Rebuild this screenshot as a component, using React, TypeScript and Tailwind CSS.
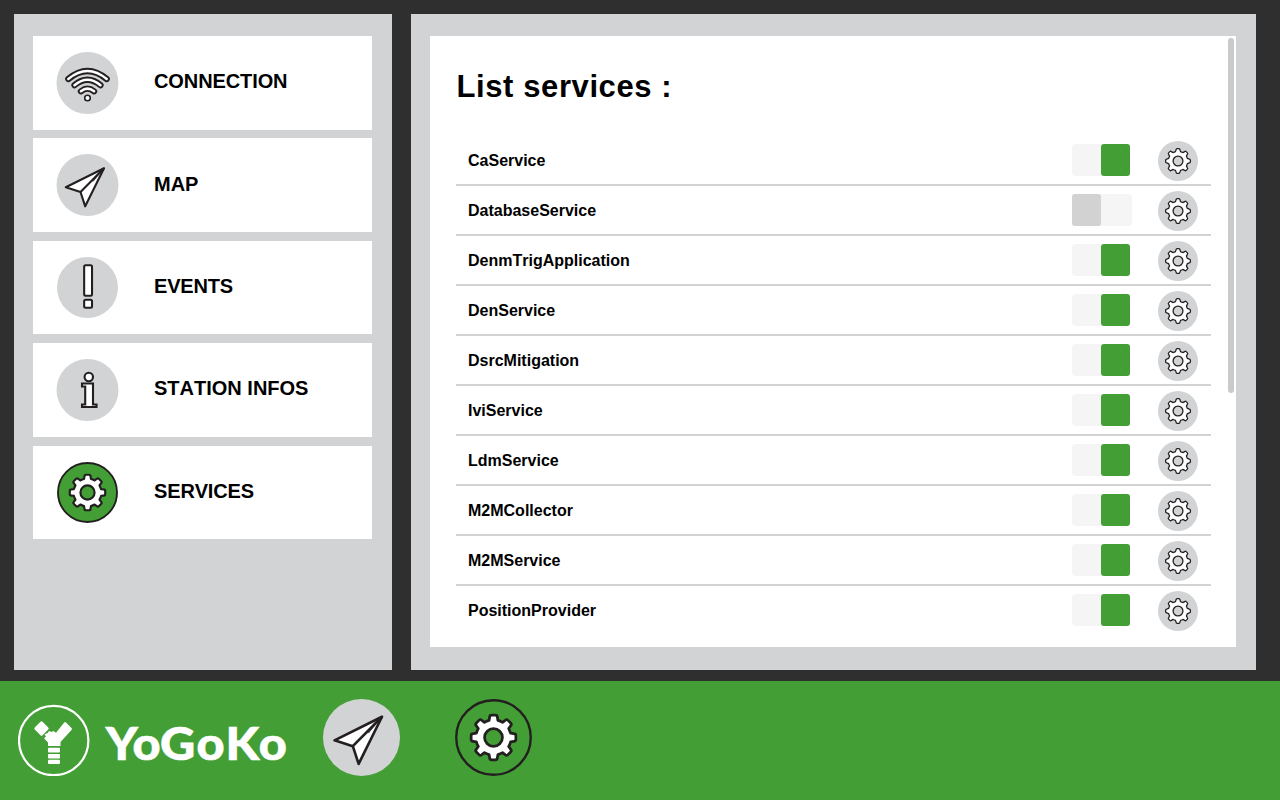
import React from "react";

type IconName = "wifi" | "plane" | "alert" | "info" | "gear";

const INK = "#231f20";
const GREY = "#d1d3d4";
const GREEN = "#439f35";

function gearPath(c: number, outer: number, body: number, halfTop: number, halfBase: number): string {
  const parts: string[] = [];
  for (let i = 0; i < 8; i++) {
    const a = (i * Math.PI) / 4;
    const at = (r: number, w: number) =>
      `${(c + r * Math.cos(a) - w * Math.sin(a)).toFixed(2)} ${(c + r * Math.sin(a) + w * Math.cos(a)).toFixed(2)}`;
    parts.push(i === 0 ? `M${at(body, -halfBase)}` : `A${body} ${body} 0 0 1 ${at(body, -halfBase)}`);
    parts.push(`L${at(outer - 1.6, -halfTop)} Q${at(outer, -halfTop)} ${at(outer, -halfTop + 1.6)}`);
    parts.push(`L${at(outer, halfTop - 1.6)} Q${at(outer, halfTop)} ${at(outer - 1.6, halfTop)} L${at(body, halfBase)}`);
  }
  return parts.join(" ") + "Z";
}

const GEAR = gearPath(31, 18, 13.8, 3.1, 3.5);
const GEAR_SMALL = gearPath(31, 19.2, 14.6, 2.9, 3.9);

function CircleIcon({ name, active = false, small = false, shift = false, className }: { name: IconName; active?: boolean; small?: boolean; shift?: boolean; className: string }) {
  const fill = active ? GREEN : GREY;
  return (
    <svg viewBox={shift ? "-0.5 0 62 62" : "0 0 62 62"} className={`overflow-visible ${className}`} fill="#fff" stroke={INK} strokeWidth="2.1" strokeLinejoin="round">
      <circle cx="31" cy="31" r={active ? 30 : 31} fill={fill} stroke={active ? INK : "none"} strokeWidth="1.9" />
      {name === "wifi" && (
        <g fill="none" strokeLinecap="round">
          {["M11.8 27Q31 11 50.2 27", "M18 33.2Q31 22.2 44 33.2", "M24.4 39.3Q31 34 37.6 39.3"].map((d) => (
            <g key={d}>
              <path d={d} strokeWidth="6.200" />
              <path d={d} stroke="#fff" strokeWidth="2.500" />
            </g>
          ))}
          <circle cx="31" cy="46" r="2.800" fill="#fff" strokeWidth="1.600" />
        </g>
      )}
      {name === "plane" && (
        <g>
          <path d="M47.500 14.300L9.300 33.300L24 38L28.700 52.300Z" />
          <path d="M24 38L47.500 14.300" fill="none" />
          <path d="M47.500 14.300L36.500 27.500L43.500 17.500" fill={INK} strokeWidth="0.500" />
        </g>
      )}
      {name === "alert" && (
        <g>
          <rect x="27.600" y="8.300" width="8" height="31" rx="1.500" />
          <rect x="27.600" y="43.500" width="8" height="8" rx="1.500" />
        </g>
      )}
      {name === "info" && (
        <g>
          <circle cx="32.300" cy="18" r="4.200" />
          <path d="M25.500 24.500H36.500V45.500H40V48H25.500V45.500H28.700V27.500H25.500Z" strokeLinejoin="miter" />
        </g>
      )}
      {name === "gear" && (
        <g>
          <path d={small ? GEAR_SMALL : GEAR} strokeWidth={small ? 2 : 2.2} />
          <circle cx="31" cy="31" r={small ? 7.6 : 7.2} fill={fill} strokeWidth={small ? 2 : 2.2} />
        </g>
      )}
    </svg>
  );
}

const menu: { label: string; icon: IconName; active?: boolean; box: string; text: string }[] = [
  { label: "CONNECTION", icon: "wifi", box: "-mb-px h-[94px]", text: "pb-[5px] tracking-[-0.1px]" },
  { label: "MAP", icon: "plane", box: "h-[94px]", text: "pb-[3px]" },
  { label: "EVENTS", icon: "alert", box: "h-[93px]", text: "pb-[3px] tracking-[-0.2px]" },
  { label: "STATION INFOS", icon: "info", box: "h-[94px]", text: "pb-[5px]" },
  { label: "SERVICES", icon: "gear", active: true, box: "h-[93px]", text: "pb-[3px] tracking-[-0.15px]" },
];

const services = [
  { name: "CaService", on: true },
  { name: "DatabaseService", on: false },
  { name: "DenmTrigApplication", on: true },
  { name: "DenService", on: true },
  { name: "DsrcMitigation", on: true },
  { name: "IviService", on: true },
  { name: "LdmService", on: true },
  { name: "M2MCollector", on: true },
  { name: "M2MService", on: true },
  { name: "PositionProvider", on: true },
];

function Toggle({ on }: { on: boolean }) {
  return on ? (
    <div className="mr-[28px] flex h-8 w-[58px] justify-end rounded bg-[#f5f5f5]">
      <div className="h-8 w-[29px] rounded-[3px] bg-[#439f35]" />
    </div>
  ) : (
    <div className="mr-[26px] flex h-8 w-[60px] rounded bg-[#f5f5f5]">
      <div className="h-8 w-[29px] rounded-[3px] bg-[#d2d2d2]" />
    </div>
  );
}

function Logo() {
  return (
    <svg className="h-[72px] w-[274px]" viewBox="18 704 274 72" fill="#fff">
      <circle cx="53.700" cy="740.500" r="34.700" fill="none" stroke="#fff" strokeWidth="2.200" />
      <rect x="-5.500" y="-5.500" width="11" height="11" rx="1.500" transform="translate(41.500 728.500) rotate(45)" />
      <path d="M44.500 734.500L48 732.800L49 731L51.500 732L53.500 731L56 732.800L64 722.800Q65 721.500 66 722.500L71.500 728Q72.500 729 71.500 730L60.500 742V746H48V742.500L44 738.200L46 736.500Z" />
      <rect x="48" y="747.800" width="12" height="4.700" rx="1" />
      <rect x="48" y="753.900" width="12" height="4.500" rx="1" />
      <rect x="48" y="759.700" width="12" height="4.300" rx="1" />
      <text transform="translate(105.500 760) scale(1.070 1)" x="0.300 25.200 51 85 112.200 143.300" y="0" fontFamily="Lato, sans-serif" fontWeight="900" fontSize="45.500" stroke="#fff" strokeWidth="0.600">YoGoKo</text>
    </svg>
  );
}

export default function App() {
  return (
    <div className="flex h-[800px] w-[1280px] flex-col overflow-hidden bg-[#2f2f2f] font-['Liberation_Sans',sans-serif] font-bold text-black [font-kerning:none]">
      <div className="flex h-[681px] gap-[19px] pt-[14px] pl-[14px]">
        <nav className="flex h-[656px] w-[378px] flex-col gap-[9px] bg-[#d1d3d4] px-[19px] pt-[22px]">
          {menu.map((m) => (
            <div key={m.label} className={`flex w-[339px] shrink-0 items-center bg-white pl-[23px] ${m.box}`}>
              <CircleIcon name={m.icon} active={m.active} shift={m.icon !== "alert" && !m.active} className={m.icon === "alert" || m.active ? "ml-px size-[61px]" : "size-[62px]"} />
              <span className={`ml-[36px] text-[20px] leading-6 whitespace-nowrap ${m.text}`}>{m.label}</span>
            </div>
          ))}
        </nav>
        <main className="h-[656px] w-[845px] bg-[#d1d3d4] px-[19px] pt-[22px]">
          <div className="flex h-[611px] w-[806px] justify-between overflow-hidden bg-white pr-[2px] pl-[26px]">
            <section className="w-[755px]">
              <h1 className="h-[100px] pt-[33px] pl-[0.500px] text-[31px] leading-9 tracking-[0.600px] whitespace-nowrap">List services :</h1>
              {services.map((s, i) => (
                <div key={s.name} className={`flex h-[50px] items-center border-[#d1d3d4] pr-[13px] pl-3 ${i < 9 ? "border-b-2" : "pb-[2px]"}`}>
                  <span className="grow pt-[2px] text-[16px] leading-6">{s.name}</span>
                  <Toggle on={s.on} />
                  <CircleIcon name="gear" small className="mt-[2px] size-10" />
                </div>
              ))}
            </section>
            <div className="mt-[2px] h-[355px] w-[6px] rounded-full bg-[#cacaca]" />
          </div>
        </main>
      </div>
      <footer className="flex h-[119px] items-start bg-[#439f35] pl-[18px]">
        <div className="mt-[23px]">
          <Logo />
        </div>
        <CircleIcon name="plane" className="mt-[18px] ml-[31px] size-[77px]" />
        <CircleIcon name="gear" active className="mt-[18px] ml-[55px] size-[77px]" />
      </footer>
    </div>
  );
}
